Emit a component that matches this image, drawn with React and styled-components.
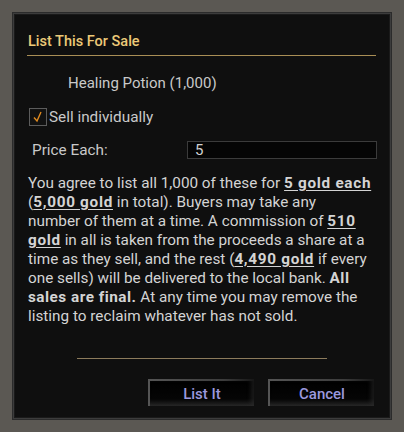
import React, { useState } from 'react';
import styled, { createGlobalStyle } from 'styled-components';

const GlobalStyle = createGlobalStyle`
  html, body {
    margin: 0;
    padding: 0;
    background: #5b5853;
  }
  body {
    font-family: Roboto, "Liberation Sans", sans-serif;
  }
`;

const Page = styled.div`
  width: 404px;
  height: 432px;
  padding: 12px;
  box-sizing: border-box;
`;

const Dialog = styled.div`
  width: 380px;
  height: 408px;
  box-sizing: border-box;
  background: #0f0f0f;
  border: 1px solid #2b2b2b;
  box-shadow: inset 0 0 0 1px #3c3c3c, inset 0 0 0 2px #1a1a1a;
  padding: 20px 15px 0 14px;
  display: flex;
  flex-direction: column;
`;

const Title = styled.h2`
  margin: 0;
  font-size: 14.5px;
  font-weight: 500;
  color: #ecc978;
  padding: 0 0 5px 1px;
  border-bottom: 1px solid #a98e55;
  line-height: 17px;
`;

const ItemName = styled.div`
  margin: 19px 0 0 41px;
  font-size: 15px;
  color: #c9c9c9;
  line-height: 17px;
`;

const CheckRow = styled.label`
  display: flex;
  align-items: center;
  margin: 16px 0 0 2px;
  font-size: 15.3px;
  color: #c9c9c9;
  gap: 2px;
  cursor: pointer;
`;

const Box = styled.span`
  width: 16px;
  height: 16px;
  border: 1px solid #5c5c5c;
  background: #111;
  display: flex;
  align-items: center;
  justify-content: center;
`;

const PriceRow = styled.div`
  display: flex;
  align-items: center;
  justify-content: space-between;
  margin: 15px 0 0 5px;
`;

const Label = styled.span`
  font-size: 15.3px;
  color: #c9c9c9;
`;

const PriceInput = styled.input`
  width: 190px;
  height: 18px;
  box-sizing: border-box;
  background: #050505;
  border: 1px solid #3b3b3b;
  color: #d0d0d0;
  font-family: Roboto, "Liberation Sans", sans-serif;
  font-size: 15px;
  padding: 0 7px;
  margin-right: -1px;
  outline: none;
`;

const Terms = styled.p`
  margin: 15px 0 0 1px;
  font-size: 15.3px;
  line-height: 19px;
  color: #d4d4d4;
  white-space: nowrap;
`;

const Amount = styled.span`
  font-weight: 700;
  letter-spacing: 0.7px;
  text-decoration: underline;
  text-underline-offset: 2px;
`;

const Strong = styled.span`
  font-weight: 700;
  letter-spacing: 0.5px;
`;

const Rule = styled.hr`
  width: 250px;
  margin: 32px 0 0 50px;
  border: 0;
  border-top: 1px solid #8c7b5c;
  height: 0;
`;

const Buttons = styled.div`
  display: flex;
  justify-content: flex-end;
  gap: 14px;
  margin-top: 20px;
  padding-right: 2px;
`;

const Button = styled.button`
  width: 106px;
  height: 27px;
  background: linear-gradient(180deg, #000 0%, #050505 70%, #1b1b1b 100%);
  border: 0;
  border-top: 2px solid #4a4a4a;
  border-left: 2px solid #3a3a3a;
  border-image: linear-gradient(90deg, #555 0%, #3d3d3d 70%, #151515 100%) 1;
  box-shadow: inset -3px -2px 4px rgba(70, 70, 70, 0.35);
  color: #9b98de;
  font-family: Roboto, "Liberation Sans", sans-serif;
  font-size: 15px;
  font-weight: 500;
  padding: 0;
  cursor: pointer;
`;

function Check() {
  return (
    <svg width="14" height="14" viewBox="0 0 14 14">
      <path d="M3 7.5 L6 11 L10 2" fill="none" stroke="#e08a1e" strokeWidth="1.4" />
    </svg>
  );
}

export default function App() {
  const [single, setSingle] = useState(true);
  const [price, setPrice] = useState('5');

  return (
    <Page>
      <GlobalStyle />
      <Dialog>
        <Title>List This For Sale</Title>
        <ItemName>Healing Potion (1,000)</ItemName>
        <CheckRow onClick={() => setSingle(!single)}>
          <Box>{single && <Check />}</Box>
          Sell individually
        </CheckRow>
        <PriceRow>
          <Label>Price Each:</Label>
          <PriceInput value={price} onChange={(e) => setPrice(e.target.value)} />
        </PriceRow>
        {/* line breaks follow the game's own wrapping */}
        <Terms>
          You agree to list all 1,000 of these for <Amount>5 gold each</Amount>
          <br />
          (<Amount>5,000 gold</Amount> in total). Buyers may take any
          <br />
          number of them at a time. A commission of <Amount>510</Amount>
          <br />
          <Amount>gold</Amount> in all is taken from the proceeds a share at a
          <br />
          time as they sell, and the rest (<Amount>4,490 gold</Amount> if every
          <br />
          one sells) will be delivered to the local bank. <Strong>All</Strong>
          <br />
          <Strong>sales are final.</Strong> At any time you may remove the
          <br />
          listing to reclaim whatever has not sold.
        </Terms>
        <Rule />
        <Buttons>
          <Button>List It</Button>
          <Button>Cancel</Button>
        </Buttons>
      </Dialog>
    </Page>
  );
}
